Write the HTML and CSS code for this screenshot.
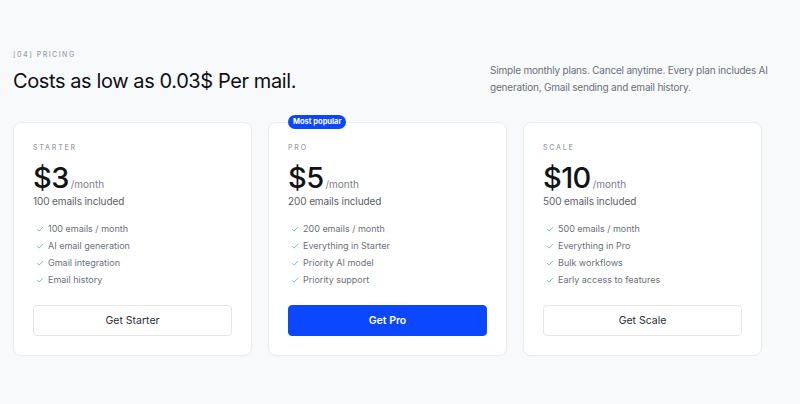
FILE: index.html
```html
<!doctype html>
<html>
<head>
<meta charset="UTF-8">
<title>Pricing</title>
<link rel="stylesheet" href="styles.css">
</head>
<body>
<section class="pricing">
  <div class="head">
    <div class="head-left">
      <div class="eyebrow">[04] PRICING</div>
      <h2>Costs as low as 0.03$ Per mail.</h2>
    </div>
    <p class="lead">Simple monthly plans. Cancel anytime. Every plan includes AI generation, Gmail sending and email history.</p>
  </div>

  <div class="plans">
    <div class="plan">
      <div class="plan-name">STARTER</div>
      <div class="price"><span class="amount">$3</span><span class="per">/month</span></div>
      <div class="quota">100 emails included</div>
      <ul class="features">
        <li><svg viewBox="0 0 10 10"><path d="M1.5 5.3 L4 7.6 L8.6 2.6"/></svg>100 emails / month</li>
        <li><svg viewBox="0 0 10 10"><path d="M1.5 5.3 L4 7.6 L8.6 2.6"/></svg>AI email generation</li>
        <li><svg viewBox="0 0 10 10"><path d="M1.5 5.3 L4 7.6 L8.6 2.6"/></svg>Gmail integration</li>
        <li><svg viewBox="0 0 10 10"><path d="M1.5 5.3 L4 7.6 L8.6 2.6"/></svg>Email history</li>
      </ul>
      <a class="btn">Get Starter</a>
    </div>

    <div class="plan popular">
      <span class="badge">Most popular</span>
      <div class="plan-name">PRO</div>
      <div class="price"><span class="amount">$5</span><span class="per">/month</span></div>
      <div class="quota">200 emails included</div>
      <ul class="features">
        <li><svg viewBox="0 0 10 10"><path d="M1.5 5.3 L4 7.6 L8.6 2.6"/></svg>200 emails / month</li>
        <li><svg viewBox="0 0 10 10"><path d="M1.5 5.3 L4 7.6 L8.6 2.6"/></svg>Everything in Starter</li>
        <li><svg viewBox="0 0 10 10"><path d="M1.5 5.3 L4 7.6 L8.6 2.6"/></svg>Priority AI model</li>
        <li><svg viewBox="0 0 10 10"><path d="M1.5 5.3 L4 7.6 L8.6 2.6"/></svg>Priority support</li>
      </ul>
      <a class="btn btn-primary">Get Pro</a>
    </div>

    <div class="plan">
      <div class="plan-name">SCALE</div>
      <div class="price"><span class="amount">$10</span><span class="per">/month</span></div>
      <div class="quota">500 emails included</div>
      <ul class="features">
        <li><svg viewBox="0 0 10 10"><path d="M1.5 5.3 L4 7.6 L8.6 2.6"/></svg>500 emails / month</li>
        <li><svg viewBox="0 0 10 10"><path d="M1.5 5.3 L4 7.6 L8.6 2.6"/></svg>Everything in Pro</li>
        <li><svg viewBox="0 0 10 10"><path d="M1.5 5.3 L4 7.6 L8.6 2.6"/></svg>Bulk workflows</li>
        <li><svg viewBox="0 0 10 10"><path d="M1.5 5.3 L4 7.6 L8.6 2.6"/></svg>Early access to features</li>
      </ul>
      <a class="btn">Get Scale</a>
    </div>
  </div>
</section>
</body>
</html>
```

FILE: styles.css
```css
html,body{margin:0;background:#f8f9fb;}
body{font-family:Inter,"Noto Sans",sans-serif;color:#111318;}

.pricing{width:749px;padding:49px 0 0 13px;}

.head{display:flex;justify-content:space-between;align-items:flex-start;}
.eyebrow{font-size:7px;letter-spacing:1.5px;color:#9a9ea6;font-weight:500;line-height:12px;}
h2{margin:7px 0 0;font-size:20px;font-weight:400;letter-spacing:-0.4px;line-height:26px;color:#0d0f14;}
.lead{margin:13px -10px 0 0;width:282px;font-size:10px;letter-spacing:-0.2px;line-height:16.5px;color:#6b7079;}

.plans{display:grid;grid-template-columns:repeat(3,1fr);gap:16px;margin-top:27px;}

.plan{position:relative;background:#fff;border:1px solid #e9ebef;border-radius:8px;padding:20px 19px 19px;}
.plan-name{font-size:7px;letter-spacing:1.8px;color:#9a9ea6;font-weight:500;line-height:10px;}
.price{display:flex;align-items:baseline;margin-top:8px;}
.amount{font-size:29px;font-weight:500;letter-spacing:-0.6px;line-height:34px;}
.per{font-size:10px;color:#7b8089;margin-left:2px;}
.quota{font-size:10px;letter-spacing:-0.1px;color:#5b6069;line-height:14px;margin-top:-1px;}

.features{list-style:none;margin:12px 0 0;padding:0 0 0 3px;}
.features li{display:flex;align-items:center;font-size:9px;color:#6b7079;line-height:17px;}
.features svg{width:8px;height:8px;margin-right:4px;fill:none;stroke:#4cc08e;stroke-width:1;}

.btn{display:flex;align-items:center;justify-content:center;height:29px;margin-top:17px;border:1px solid #e4e6ea;border-radius:4px;font-size:10.5px;color:#2a2e35;background:#fff;}
.btn-primary{background:#0a47ff;border-color:#0a47ff;color:#fff;font-weight:600;}

.badge{position:absolute;top:-8px;left:19px;background:#0a47ff;color:#fff;font-size:7.5px;font-weight:700;padding:2px 5px;border-radius:8px;line-height:10px;}
```
